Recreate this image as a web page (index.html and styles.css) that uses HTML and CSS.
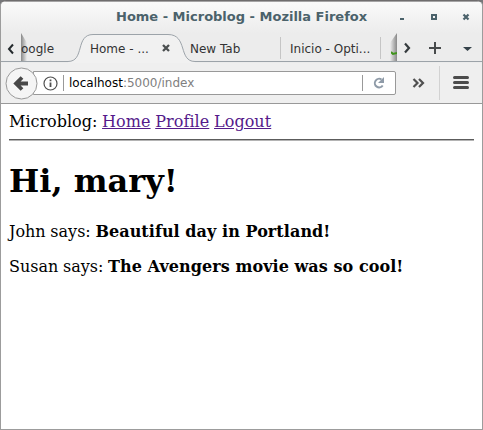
FILE: index.html
```html
<!DOCTYPE html>
<html lang="en">
<head>
<meta charset="utf-8">
<title>Home - Microblog</title>
<link rel="stylesheet" href="styles.css">
</head>
<body>
<div class="window">
  <header class="titlebar">
    <span class="title">Home - Microblog - Mozilla Firefox</span>
    <svg class="controls" width="80" height="32" viewBox="0 0 80 32"><path d="M0 16h4v2H0z" fill="#4b626b"/><path d="M32 13h4v4h-4z" fill="none" stroke="#4b626b" stroke-width="2"/><path d="M63.500 12.500l5 5M68.500 12.500l-5 5" stroke="#4b626b" stroke-width="2.200"/></svg>
  </header>
  <div class="tabs">
    <svg class="tab-line" width="481" height="30" viewBox="0 0 481 30"><path d="M67 28.500C84 28.500 74 1.500 92 1.500H167C187 1.500 177 28.500 194 28.500V30H67z" fill="#f1f1f1"/><path d="M0 28.500H67C84 28.500 74 1.500 92 1.500H167C187 1.500 177 28.500 194 28.500H481" fill="none" stroke="#9ca3a9"/></svg>
    <button class="scroll left"><svg width="20" height="30" viewBox="0 0 20 30"><path d="M12 11.500l-4 4.500 4 4.500" fill="none" stroke="#252b2e" stroke-width="2"/></svg></button>
    <div class="tab first"><span>oogle</span></div>
    <div class="tab active"><span>Home - ...</span><svg width="8" height="8" viewBox="0 0 8 8"><path d="M1 1l6 6M7 1L1 7" stroke="#4b4f50" stroke-width="2.300"/></svg></div>
    <div class="tab new"><span>New Tab</span></div>
    <div class="tab inicio"><span>Inicio - Opti...</span></div>
    <div class="tab last"><svg width="6" height="6" viewBox="0 0 6 6"><path d="M0 2l2 2 4-1" fill="none" stroke="#3f941a" stroke-width="2"/></svg></div>
    <svg class="tab-tools" width="84" height="30" viewBox="0 0 84 30"><path d="M7 10.500l4 4.500-4 4.500" fill="none" stroke="#353b3e" stroke-width="2.200"/><path d="M31 15h12M37 9v12" stroke="#484b4c" stroke-width="2"/><path d="M65 14h9l-4.500 4z" fill="#35424a"/></svg>
  </div>
  <div class="toolbar">
    <svg class="back" width="33" height="33" viewBox="0 0 33 33"><circle cx="16.500" cy="16.500" r="15.500" fill="#f5f5f5" stroke="#999"/><path d="M23 16.500H12M17 10.500l-6 6 6 6" fill="none" stroke="#484848" stroke-width="3.800"/></svg>
    <div class="urlbar">
      <svg class="info" width="15" height="15" viewBox="0 0 15 15"><circle cx="7.500" cy="7.500" r="6.500" fill="none" stroke="#505050" stroke-width="1.200"/><path d="M6.600 3.500h1.800v1.800H6.600zM6.600 6.500h1.800V11H6.600z" fill="#505050"/></svg>
      <div class="url">localhost<span>:5000/index</span></div>
      <svg class="reload" width="33" height="16" viewBox="0 0 33 16"><path d="M.5 0v16" stroke="#999"/><path d="M19.500 4.500a4.300 4.300 0 1 0 1.200 6" fill="none" stroke="#8f9ba8" stroke-width="2"/><path d="M22 2v6h-6z" fill="#8f9ba8"/></svg>
    </div>
    <svg class="tools" width="85" height="40" viewBox="0 0 85 40"><path d="M17.500 16l4 4-4 4M23 16l4 4-4 4" fill="none" stroke="#505050" stroke-width="2.200"/><path d="M43.500 3v34" stroke="#d2d2d2"/><path d="M58.500 14.500h13M58.500 19.500h13M58.500 24.500h13" stroke="#4c4c4c" stroke-width="3" stroke-linecap="round"/></svg>
  </div>
  <main class="page">
    <div>Microblog: <a href="#">Home</a> <a href="#">Profile</a> <a href="#">Logout</a></div>
    <hr>
    <h1>Hi, mary!</h1>
    <p>John says: <b>Beautiful day in Portland!</b></p>
    <p>Susan says: <b>The Avengers movie was so cool!</b></p>
  </main>
</div>
</body>
</html>
```
FILE: styles.css
```css
* { box-sizing: border-box; }
body { margin: 0; background: #77777a; }
svg { display: block; flex: none; }
.window {
  width: 483px; height: 430px; overflow: hidden;
  display: flex; flex-direction: column;
  border: 1px solid #9c9c9c; border-top-color: #6f6d6e;
  border-radius: 6px 6px 0 0; background: #ececec;
}
.titlebar {
  height: 32px; flex: none; display: flex; align-items: center;
  background: linear-gradient(#fafafa, #ececec);
  border-top: 1px solid #a5a4a5;
}
.title {
  width: 251px; margin: -2px 0 0 115px; white-space: nowrap;
  font: bold 13px/32px "DejaVu Sans", sans-serif; color: #4b626b;
}
.controls { margin-left: 33px; }
.tabs {
  position: relative; height: 30px; flex: none; display: flex; align-items: center;
  font: 12px/30px "DejaVu Sans", sans-serif; color: #333;
}
.tab-line { position: absolute; left: 0; top: 0; }
.scroll { width: 20px; height: 30px; padding: 0; border: 0; background: none; position: relative; }
.tab { position: relative; height: 30px; display: flex; align-items: center; white-space: nowrap; }
.tab span { padding-top: 1px; }
.first { width: 49px; }
.first::before {
  content: ""; position: absolute; left: 0; top: 0; width: 6px; height: 28px;
  background: linear-gradient(90deg, #888, #ececec00);
  clip-path: polygon(0 0, 100% 35%, 100% 100%, 0 100%);
}
.first span { position: relative; }
.active { width: 120px; padding-left: 20px; }
.active span { width: 72px; }
.new { width: 91px; }
.new::after, .inicio::after {
  content: ""; position: absolute; right: 0; top: 4px; width: 1px; height: 22px; background: #c5c5c5;
}
.inicio { width: 100px; padding-left: 9px; }
.last { width: 17px; padding: 10px 0 0 10px; }
.last::before {
  content: ""; position: absolute; right: 1px; top: 0; width: 7px; height: 28px;
  background: linear-gradient(270deg, #888, #ececec00);
  clip-path: polygon(100% 0, 0 35%, 0 100%, 100% 100%);
}
.last svg { position: relative; }
.tab-tools { position: relative; }
.toolbar {
  height: 41px; flex: none; display: flex; align-items: center;
  background: #efefef; border-bottom: 1px solid #999;
}
.back { margin-left: 4px; position: relative; z-index: 1; }
.urlbar {
  width: 363px; height: 24px; margin-left: -5px; padding-left: 9px;
  display: flex; align-items: center; background: #fff;
  border: 1px solid #999; border-radius: 0 2px 2px 0;
}
.url {
  margin-left: 5px; border-left: 1px solid #999; padding-left: 5px;
  flex: 1; font: 12px/16px "DejaVu Sans", sans-serif; color: #000;
}
.url span { color: #808080; }
.page {
  flex: 1; padding: 8px; background: #fff; color: #000;
  font: 16px/19px "DejaVu Serif", serif;
}
.page > div, .page p { word-spacing: -0.4px; }
.page > div a { word-spacing: 0; letter-spacing: 0.06px; }
.page b { word-spacing: 0; letter-spacing: 0.06px; }
.page a { color: #551a8b; }
.page hr { margin: 8px 0 0; border: 0; height: 2px; background: linear-gradient(#5c5c5c 50%, #b4b4b4 50%); }
.page h1 { font-size: 32px; line-height: 38px; margin: 21px 0 22px; }
.page p { margin: 16px 0; }
```
